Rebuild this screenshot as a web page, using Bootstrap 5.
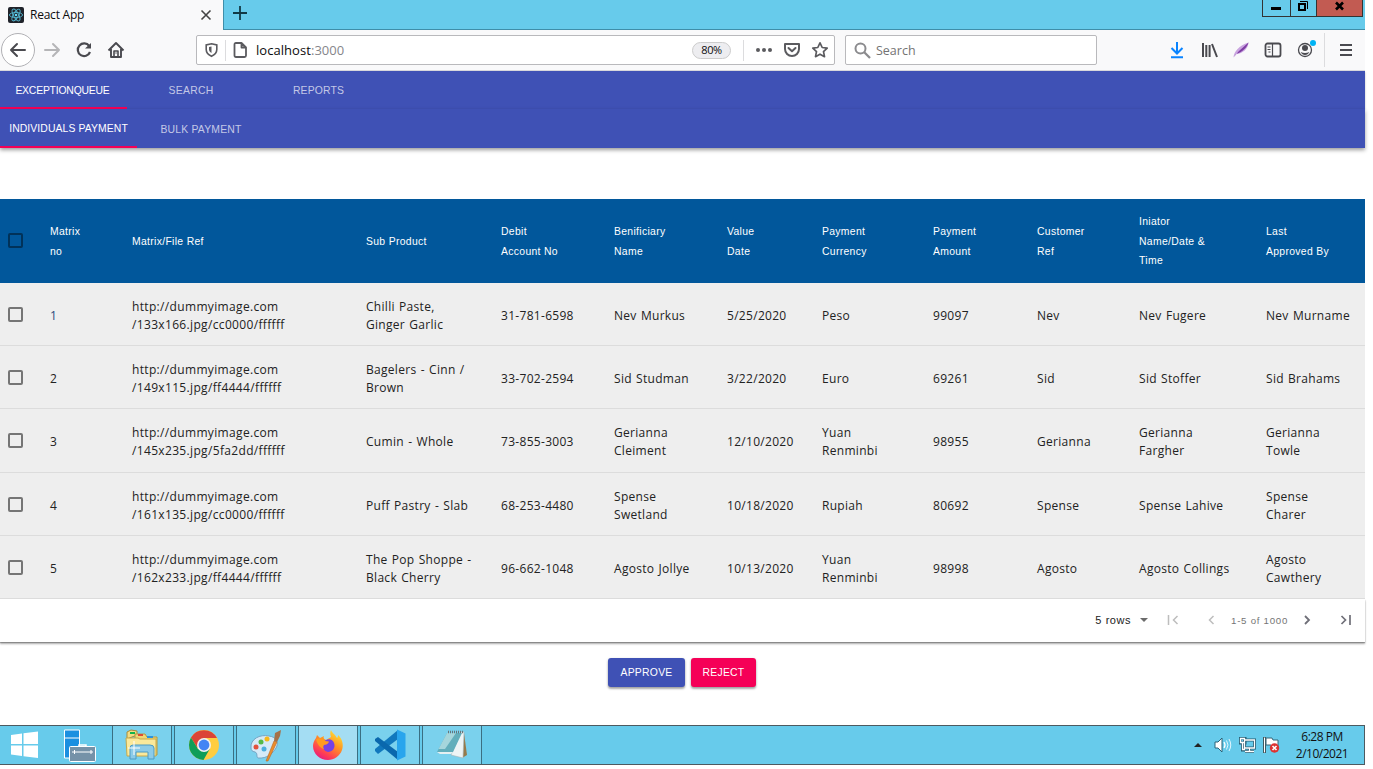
<!DOCTYPE html>
<html lang="en">
<head>
<meta charset="utf-8">
<meta name="viewport" content="width=device-width, initial-scale=1">
<title>React App</title>
<link href="https://cdn.jsdelivr.net/npm/bootstrap@5.3.0/dist/css/bootstrap.min.css" rel="stylesheet">
<style>
body{background:#fff;font-family:"Open Sans","Noto Sans",sans-serif;font-size:12px;color:#222;overflow:hidden;line-height:1.5}
svg{display:block;flex:none}
.desktop{width:1365px;height:765px}
.titlebar{height:30px;background:#67cbeb}
.tab-on{width:223px;background:#f9f9fa;color:#0c0c0d;padding-left:8px;padding-right:11px;letter-spacing:-.23px}
.tab-rest{border-left:1px solid #3f8ea9;border-bottom:1px solid #3f8ea9}
.winbtns{height:17px;border:1px solid #333;border-top:0;margin-right:2px}
.winbtns>span{border-right:1px solid #333;height:16px}
.winbtns>span:last-child{border:0;background:#c25b52}
.toolbar{height:41px;background:#f9f9fa;border-bottom:1px solid #dcdce0;padding-left:1px}
.backbtn{width:34px;height:34px;border:1px solid #b1b1b5;background:#fff}
.field{height:30px;background:#fff;border:1px solid #b9b9bc;border-radius:2px;font-size:13px;color:#0c0c0d}
.field>span{padding-top:2px}
.vline{width:1px;background:#dcdcde}
.field>.zoomlvl{width:39px;height:17px;border:1px solid #ccc;background:#ededf0;font-size:11px;letter-spacing:-.4px;padding-top:1px}
.appbar{background:#3f51b5;font:10.4px "Liberation Sans",Arial,sans-serif;color:rgba(255,255,255,.7);position:relative}
.appbar span{display:flex;align-items:center;justify-content:center;white-space:nowrap}
.appbar .on{color:#fff;border-bottom:2px solid #f50057;padding-top:2px}
.bar1{height:38px;box-shadow:0 1px 2px rgba(0,0,0,.25)}
.bar2{height:39px;box-shadow:0 2px 4px rgba(0,0,0,.4)}
.grid{table-layout:fixed;width:1365px;border-collapse:separate;border-spacing:0}
.grid td,.grid th{padding:0 0 0 13px;vertical-align:middle;white-space:nowrap;overflow:visible}
.grid th{height:84px;background:#01579b;color:#fff;font:10.4px/19.4px "Liberation Sans",Arial,sans-serif;letter-spacing:.32px;padding-top:1px}
.grid td{height:63.2px;background:#eee;border-bottom:1px solid #dcdcdc;font-size:12px;line-height:18px;letter-spacing:.3px;word-spacing:.8px;color:#222;padding-top:4px}
.grid td:nth-child(3){letter-spacing:.34px}
.grid td:first-child,.grid th:first-child{padding-left:8px}
.box{display:block;width:15px;height:15px;border:2px solid #757575;border-radius:2px}
.grid td .box{margin-top:-3px}
.grid th .box{border-color:#013259;margin-top:-2px}
.pager{height:43px;box-shadow:0 2px 2px rgba(0,0,0,.3),0 1px 1px rgba(0,0,0,.25);font:11px "Liberation Sans",Arial,sans-serif;letter-spacing:.55px;background:#fff;padding-right:13px}
.act{height:29px;font:10.400px/29px "Liberation Sans",Arial,sans-serif;letter-spacing:.25px;color:#fff;border-radius:3px;border:0;padding:0;text-align:center;box-shadow:0 2px 2px rgba(0,0,0,.25),0 1px 3px rgba(0,0,0,.2)}
.taskbar{height:40px;background:#67cbeb;border:1px solid #4d5a60;border-left:0}
.task{width:60px;height:38px;border-left:1px solid #3a6f82;border-right:1px solid #3a6f82;background:#7ad1ed;margin-right:2px}
.task.live{background:#a4ddf3}
.clock{font:12px/17px "Open Sans","Noto Sans",sans-serif;color:#111;letter-spacing:-.5px;width:66px}
</style>
</head>
<body>
<div class="desktop d-flex flex-column">
  <div class="titlebar d-flex">
    <div class="tab-on d-flex align-items-center">
      <svg width="16" height="16" viewBox="0 0 16 16"><rect width="16" height="16" rx="2" fill="#20232a"/><g fill="none" stroke="#53b5cf" stroke-width=".9"><ellipse cx="8" cy="8" rx="6.600" ry="2.600"/><ellipse cx="8" cy="8" rx="6.600" ry="2.600" transform="rotate(60 8 8)"/><ellipse cx="8" cy="8" rx="6.600" ry="2.600" transform="rotate(120 8 8)"/></g><circle cx="8" cy="8" r="1.300" fill="#61dafb"/></svg>
      <span style="margin-left:6px">React App</span>
      <svg class="ms-auto" width="12" height="12" viewBox="0 0 12 12"><path d="M1.500 1.500l9 9m0-9l-9 9" stroke="#444" stroke-width="1.600"/></svg>
    </div>
    <div class="tab-rest flex-grow-1 d-flex">
      <svg class="mt-1" width="32" height="18" viewBox="0 0 32 18"><path d="M9 9h14M16 2v14" stroke="#123945" stroke-width="1.800"/></svg>
      <div class="winbtns d-flex ms-auto">
        <span style="width:28px"><svg width="27" height="16"><path d="M8 7h10v3H8z"/></svg></span>
        <span style="width:26px"><svg width="25" height="16" fill="none" stroke="#000"><path d="M8 4h6v6H8z" stroke-width="2"/><path d="M9 1.500h7.500V9" stroke-width="1"/></svg></span>
        <span style="width:45px"><svg width="45" height="16"><path d="M19 2.500l7 7m0-7l-7 7" stroke="#000" stroke-width="2.600"/></svg></span>
      </div>
    </div>
  </div>
  <div class="toolbar d-flex align-items-center">
    <div class="backbtn rounded-circle d-flex align-items-center justify-content-center"><svg width="18" height="16" viewBox="0 0 18 16" fill="none" stroke="#4a4a4f" stroke-width="2" stroke-linecap="round" stroke-linejoin="round"><path d="M16 8H2m6-6L2 8l6 6"/></svg></div>
    <svg style="margin-left:8px" width="18" height="16" viewBox="0 0 18 16" fill="none" stroke="#b5b5b7" stroke-width="2" stroke-linecap="round" stroke-linejoin="round"><path d="M2 8h14m-6-6l6 6-6 6"/></svg>
    <svg style="margin-left:14px" width="18" height="18" viewBox="0 0 18 18" fill="none" stroke="#4a4a4f" stroke-width="2.200"><path d="M14.200 5A6.300 6.300 0 1 0 15 11"/><path d="M16 2v5.500h-6z" fill="#4a4a4f" stroke="none"/></svg>
    <svg style="margin-left:14px" width="18" height="18" viewBox="0 0 18 18" fill="none" stroke="#4a4a4f" stroke-width="1.900" stroke-linejoin="round"><path d="M1.500 9.500L9 2l7.500 7.500M4 8v8h10V8"/><path d="M7 10h4v6H7zM8.500 12h1" stroke-width="1.600"/></svg>
    <div class="field d-flex align-items-center" style="width:639px;margin-left:71px;padding-left:8px">
      <svg width="13" height="16" viewBox="0 0 13 16" fill="none" stroke="#5b5b5f" stroke-width="1.600"><path d="M6.500 1.800L11.800 3v4.500c0 3.300-2 5.300-5.300 6.800C3.200 12.800 1.200 10.800 1.200 7.500V3z"/><path d="M6.500 4.500v6.500C5 10 4 9 4 7.500V5z" fill="#5b5b5f" stroke="none"/></svg>
      <div class="vline" style="height:21px;margin:0 7px 0 7px"></div>
      <svg width="14" height="16" viewBox="0 0 14 16" fill="none" stroke="#5b5b5f" stroke-width="1.800" stroke-linejoin="round"><path d="M1.500 2.500q0-1.500 1.500-1.500h5.500l4.500 4.500v8q0 1.500-1.500 1.500H3q-1.500 0-1.500-1.500zM8.500 1v4.500H13"/></svg>
      <span style="margin-left:9px;letter-spacing:.05px">localhost<span style="color:#85858a">:3000</span></span>
      <span class="zoomlvl rounded-pill d-flex align-items-center justify-content-center ms-auto">80%</span>
      <div class="vline" style="height:21px;margin-left:12px;margin-right:11px"></div>
      <svg width="18" height="16" fill="#5b5b5f"><circle cx="3" cy="8" r="2"/><circle cx="9" cy="8" r="2"/><circle cx="15" cy="8" r="2"/></svg>
      <svg style="margin-left:10px" width="18" height="16" viewBox="0 0 18 16" fill="none" stroke="#5b5b5f" stroke-width="2" stroke-linecap="round" stroke-linejoin="round"><path d="M2 2h14v5a7 7 0 0 1-14 0zM5.500 6L9 9.300 12.500 6"/></svg>
      <svg style="margin:0 5px 0 10px" width="18" height="18" viewBox="0 0 18 18" fill="none" stroke="#5b5b5f" stroke-width="1.700" stroke-linejoin="round"><path d="M9 1.800l2.200 4.700 5 .6-3.700 3.500 1 5.100L9 13.200l-4.500 2.500 1-5.100L1.800 7.100l5-.6z"/></svg>
    </div>
    <div class="field d-flex align-items-center" style="width:252px;margin-left:10px;padding-left:8px;color:#737373">
      <svg width="17" height="17" viewBox="0 0 17 17" fill="none" stroke="#8b8b8e" stroke-width="2"><circle cx="6.500" cy="6.500" r="5"/><path d="M10 10l6 6" stroke-width="2.300"/></svg>
      <span style="margin-left:5px;font-size:12.500px">Search</span>
    </div>
    <svg style="margin-left:73px" width="14" height="18" viewBox="0 0 14 18" fill="none" stroke="#0a84ff" stroke-width="2"><path d="M7 1v11M1.500 7L7 12.500 12.500 7M1 16.200h12"/></svg>
    <svg style="margin-left:17px" width="18" height="16" viewBox="0 0 18 16" fill="none" stroke="#4a4a4f" stroke-width="2"><path d="M2 1v14M5.300 3v12M8.600 3v12M11 2l5 13"/></svg>
    <svg style="margin-left:14px" width="16" height="16" viewBox="0 0 16 16"><path d="M.5 15.500C1 9.500 6 3.500 15.500.5 15 7 10 11.500 3 12z" fill="#c9a4df"/><path d="M.5 15.500L6 9l9.500-8.500C14 6 9 10 3 12z" fill="#7e3ca3"/></svg>
    <svg style="margin-left:15px" width="18" height="16" viewBox="0 0 18 16" fill="none" stroke="#4a4a4f" stroke-width="1.800"><rect x="1.500" y="1.500" width="15" height="13" rx="2"/><path d="M8.500 2v12" stroke-width="1.200"/><path d="M3.500 5h3M3.500 7.500h3M4.500 10h2" stroke-width="1"/></svg>
    <svg style="margin-left:15px" width="21" height="20" viewBox="0 0 21 20"><circle cx="8" cy="10" r="6.500" fill="none" stroke="#4a4a4f" stroke-width="1.300"/><circle cx="8" cy="8" r="3" fill="#4a4a4f"/><path d="M3.700 12q4.300 2 8.600 0-1.300 3-4.300 3t-4.300-3z" fill="#4a4a4f"/><circle cx="16" cy="3" r="3" fill="#00b3f4"/></svg>
    <div class="vline" style="height:34px;margin-left:6px"></div>
    <svg style="margin-left:15px" width="12" height="14" viewBox="0 0 12 14"><path d="M0 2h12M0 7h12M0 12h12" stroke="#4a4a4f" stroke-width="2"/></svg>
  </div>
  <nav class="appbar bar1 d-flex"><span class="on" style="width:127px;letter-spacing:-.2px;padding-right:2px">EXCEPTIONQUEUE</span><span style="width:128px;letter-spacing:.25px">SEARCH</span><span style="width:127px;letter-spacing:.15px">REPORTS</span></nav>
  <nav class="appbar bar2 d-flex"><span class="on" style="width:137px;letter-spacing:.1px">INDIVIDUALS PAYMENT</span><span style="width:128px;padding-top:1px;letter-spacing:.2px">BULK PAYMENT</span></nav>
  <main style="margin-top:51px">
    <div>
    <table class="grid">
      <colgroup><col style="width:37px"><col style="width:82px"><col style="width:234px"><col style="width:135px"><col style="width:113px"><col style="width:113px"><col style="width:95px"><col style="width:111px"><col style="width:104px"><col style="width:102px"><col style="width:127px"><col style="width:112px"></colgroup>
      <thead><tr><th><i class="box"></i></th><th>Matrix<br>no</th><th>Matrix/File Ref</th><th>Sub Product</th><th>Debit<br>Account No</th><th>Benificiary<br>Name</th><th>Value<br>Date</th><th>Payment<br>Currency</th><th>Payment<br>Amount</th><th>Customer<br>Ref</th><th>Iniator<br>Name/Date &amp;<br>Time</th><th>Last<br>Approved By</th></tr></thead>
      <tbody>
      <tr><td><i class="box"></i></td><td style="color:#2c4a7c">1</td><td>http://dummyimage.com<br>/133x166.jpg/cc0000/ffffff</td><td>Chilli Paste,<br>Ginger Garlic</td><td>31-781-6598</td><td>Nev Murkus</td><td>5/25/2020</td><td>Peso</td><td>99097</td><td>Nev</td><td>Nev Fugere</td><td>Nev Murname</td></tr>
      <tr><td><i class="box"></i></td><td>2</td><td>http://dummyimage.com<br>/149x115.jpg/ff4444/ffffff</td><td>Bagelers - Cinn /<br>Brown</td><td>33-702-2594</td><td>Sid Studman</td><td>3/22/2020</td><td>Euro</td><td>69261</td><td>Sid</td><td>Sid Stoffer</td><td>Sid Brahams</td></tr>
      <tr><td><i class="box"></i></td><td>3</td><td>http://dummyimage.com<br>/145x235.jpg/5fa2dd/ffffff</td><td>Cumin - Whole</td><td>73-855-3003</td><td>Gerianna<br>Cleiment</td><td>12/10/2020</td><td>Yuan<br>Renminbi</td><td>98955</td><td>Gerianna</td><td>Gerianna<br>Fargher</td><td>Gerianna<br>Towle</td></tr>
      <tr><td><i class="box"></i></td><td>4</td><td>http://dummyimage.com<br>/161x135.jpg/cc0000/ffffff</td><td>Puff Pastry - Slab</td><td>68-253-4480</td><td>Spense<br>Swetland</td><td>10/18/2020</td><td>Rupiah</td><td>80692</td><td>Spense</td><td>Spense Lahive</td><td>Spense<br>Charer</td></tr>
      <tr><td><i class="box"></i></td><td>5</td><td>http://dummyimage.com<br>/162x233.jpg/ff4444/ffffff</td><td>The Pop Shoppe -<br>Black Cherry</td><td>96-662-1048</td><td>Agosto Jollye</td><td>10/13/2020</td><td>Yuan<br>Renminbi</td><td>98998</td><td>Agosto</td><td>Agosto Collings</td><td>Agosto<br>Cawthery</td></tr>
      </tbody>
    </table>
    <div class="pager d-flex align-items-center justify-content-end">
      <span>5 rows</span>
      <svg style="margin-left:9px" width="8" height="4"><path d="M0 0h8L4 4z" fill="#6b6b6b"/></svg>
      <svg style="margin-left:19px" width="12" height="10" viewBox="0 0 12 10" fill="none" stroke="#bdbdbd" stroke-width="1.500"><path d="M1.500 0v10M10.500 1l-4 4 4 4"/></svg>
      <svg style="margin-left:28px" width="8" height="10" viewBox="0 0 8 10" fill="none" stroke="#bdbdbd" stroke-width="1.500"><path d="M6.500 1l-4 4 4 4"/></svg>
      <span style="margin-left:16px;font-size:9.700px;letter-spacing:.72px;color:#757575">1-5 of 1000</span>
      <svg style="margin-left:15px" width="8" height="10" viewBox="0 0 8 10" fill="none" stroke="#6f6f78" stroke-width="1.800"><path d="M2 1l4 4-4 4"/></svg>
      <svg style="margin-left:29px" width="12" height="10" viewBox="0 0 12 10" fill="none" stroke="#6f6f78" stroke-width="1.700"><path d="M1.500 1l4 4-4 4M10 0v10"/></svg>
    </div>
    </div>
    <div class="d-flex justify-content-center" style="gap:6px;margin-top:16px;padding-right:1px">
      <button class="act" style="width:77px;background:#3f51b5">APPROVE</button><button class="act" style="width:65px;background:#f50057">REJECT</button>
    </div>
  </main>
  <footer class="taskbar mt-auto d-flex align-items-center">
    <svg style="margin-left:10px" width="28" height="28" viewBox="0 0 28 28" fill="#fff"><path d="M1 4l11-1.500V13H1zM13.500 2.300L28 .5V13H13.500zM1 14.500h11V25L1 23.500zM13.500 14.500H28V27l-14.500-1.800z"/></svg>
    <svg style="margin-left:26px" width="32" height="33" viewBox="0 0 32 33"><path d="M.5 1h15v28H.5zM.5 9h15" fill="#1b8fe0" stroke="#fff"/><path d="M15 18v-2h7v2" fill="none" stroke="#fff" stroke-width="1.500"/><rect x="5.500" y="17.500" width="26" height="15" rx="1" fill="#7592a8" stroke="#fff"/><path d="M8 23h21M10.500 21v4M27 21v4" stroke="#fff" stroke-width="1"/></svg>
    <span class="task d-flex align-items-center justify-content-center" style="margin-left:16px"><svg width="34" height="32" viewBox="0 0 34 32"><path d="M2 10V3l4-2 6 1v4z" fill="#f3dc83" stroke="#a98b38"/><path d="M10 9V5h10l2 3h10v18H6z" fill="#f0d774" stroke="#b6983f"/><path d="M5 3h5v2H5z" fill="#12b34b"/><path d="M13 5h5v2h-5z" fill="#dc4b35"/><path d="M22 7h6v2h-6z" fill="#2c93dd"/><path d="M1 9h12l2 1h16v17H2z" fill="#fbe99b" stroke="#c5a84a"/><path d="M5 30V19q0-3 3-3h17q4 0 4 3v11h-6v-7H11v7z" fill="#8ccbe8" stroke="#4c9bc4"/><path d="M9 12v14M3 19h12" stroke="#fff"/></svg></span>
    <span class="task d-flex align-items-center justify-content-center"><svg width="32" height="32" viewBox="0 0 32 32"><circle cx="16" cy="16" r="15" fill="#ffcd40"/><path d="M3 8.500A15 15 0 0 1 29 9H16l-6.500 10z" fill="#db4437"/><path d="M3 8.500A15 15 0 0 0 15.500 31l6.500-11.500L10 20z" fill="#0f9d58"/><circle cx="16" cy="16" r="7" fill="#f1f1f1"/><circle cx="16" cy="16" r="5.400" fill="#4285f4"/></svg></span>
    <span class="task d-flex align-items-center justify-content-center"><svg width="34" height="34" viewBox="0 0 34 34"><path d="M2 20C1 11 11 6 20 8c8 1 10 7 7 12s-9 11-18 10C7 29 9 25 6 24c-3-.5-4-2-4-4z" fill="#d5eaf7" stroke="#73a5c4"/><circle cx="7" cy="19" r="2.500" fill="#e3523d"/><circle cx="12" cy="14" r="2.500" fill="#54b948"/><circle cx="18" cy="11" r="2.500" fill="#f6b91c"/><circle cx="15" cy="21" r="2.500" fill="#4caede"/><path d="M17 33L25 13l3 1-9 19z" fill="#eb8c2c" stroke="#b96820" stroke-width=".6"/><path d="M25 13l1-8 6-3-1 6-3 6z" fill="#a57148"/></svg></span>
    <span class="task live d-flex align-items-center justify-content-center"><svg width="32" height="32" viewBox="0 0 32 32"><defs><linearGradient id="ff" x1=".8" y1="0" x2=".2" y2="1"><stop offset="0" stop-color="#ffe83b"/><stop offset=".4" stop-color="#ff9722"/><stop offset=".75" stop-color="#ff4052"/><stop offset="1" stop-color="#e31587"/></linearGradient></defs><path d="M19 1c1 3 4 4 6 8 1-1 1-2 1-3 4 3 6 10 4 15-2 6-8 10-14 10C8 31 1 25 1 17c0-3 1-5 3-8l1-3 3 3 4-2c-1 2 0 3 2 4l5-3c-1-3-1-5 0-7z" fill="url(#ff)"/><path d="M11 14c2-4 9-6 11 0 2 5-2 9-6 9-4-1-6-4-5-9z" fill="#7542e5"/><path d="M4 10c4-2 8 0 9 2l4 .5c-1 3-3 3-5 3.500-1 1-1 3 0 4-4-1-7-5-8-10z" fill="#ff9a21"/></svg></span>
    <span class="task d-flex align-items-center justify-content-center"><svg width="32" height="32" viewBox="0 0 32 32"><path d="M24 1v9L4 25l-3-3v-2z" fill="#1178bd"/><path d="M1 10l3-2 20 15v8L1 12z" fill="#0a68ad"/><path d="M23 .5l8.500 4v23l-8.500 4z" fill="#28a5ed"/></svg></span>
    <span class="task d-flex align-items-center justify-content-center"><svg width="32" height="32" viewBox="0 0 32 32"><path d="M28 4l3 22-5 3z" fill="#967a4b"/><path d="M25 3h3l-1 26-12-3z" fill="#eef4f5" stroke="#a5b3b7" stroke-width=".6"/><path d="M11 4h15l-9 19H1z" fill="#62aebb"/><path d="M11 4h9L9 20H2.500z" fill="#a5d6dc"/><path d="M1 23h16l-2 2H4z" fill="#e5f0f2"/><path d="M12 3h16" stroke="#66757a" stroke-width="2.500" stroke-dasharray="1 1"/></svg></span>
    <svg class="ms-auto" width="8" height="4"><path d="M4 0l4 4H0z" fill="#222"/></svg>
    <svg style="margin-left:12px" width="18" height="16" viewBox="0 0 18 16" fill="none" stroke="#fff"><path d="M1 5h3l4-4v14l-4-4H1z" fill="#fff" stroke="#2a6379"/><path d="M10 5q2 3 0 6" stroke-width="1.300"/><path d="M12.500 3.500q3 4.500 0 9M15 2q3.500 6 0 12" stroke="#e0f6ff"/></svg>
    <svg style="margin-left:7px" width="17" height="16" viewBox="0 0 17 16" fill="none"><path d="M6 3h9.500v8H5.500V3M10.500 11v3M6 14.500h9M1 1h5v5H1zM3.500 6v7H6" stroke="#245c72" stroke-width="3"/><path d="M6 3h9.500v8H5.500V6M10.500 11v3M6 14.500h9M1.500 1.500h4v4h-4zM3.500 6v6.500H6" stroke="#fff" stroke-width="1.300"/></svg>
    <svg style="margin-left:7px" width="17" height="16" viewBox="0 0 17 16"><path d="M1.500 0v16" stroke="#333" stroke-width="2.500"/><path d="M1.500.5v15" stroke="#fff"/><path d="M3 1h6l1 2h5v7H9L8 8H3z" fill="#fff" stroke="#376578"/><circle cx="11.500" cy="11" r="4.700" fill="#dc3232"/><path d="M9.500 9l4 4m0-4l-4 4" stroke="#fff" stroke-width="1.600"/></svg>
    <div class="clock text-center" style="margin-left:9px;margin-right:9px">6:28 PM<br>2/10/2021</div>
  </footer>
</div>
<script src="https://cdn.jsdelivr.net/npm/bootstrap@5.3.0/dist/js/bootstrap.bundle.min.js"></script>
</body>
</html>
